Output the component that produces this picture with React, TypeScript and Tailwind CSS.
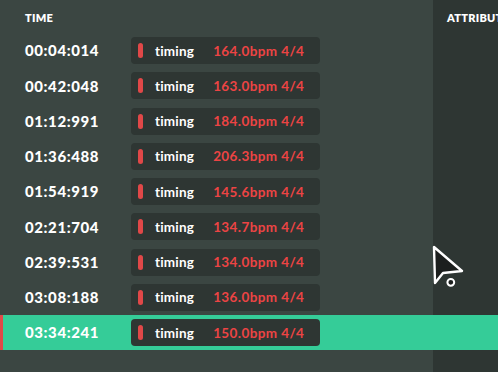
const rows = [
  { time: "00:04:014", bpm: "164.0bpm 4/4" },
  { time: "00:42:048", bpm: "163.0bpm 4/4" },
  { time: "01:12:991", bpm: "184.0bpm 4/4" },
  { time: "01:36:488", bpm: "206.3bpm 4/4" },
  { time: "01:54:919", bpm: "145.6bpm 4/4" },
  { time: "02:21:704", bpm: "134.7bpm 4/4" },
  { time: "02:39:531", bpm: "134.0bpm 4/4" },
  { time: "03:08:188", bpm: "136.0bpm 4/4" },
  { time: "03:34:241", bpm: "150.0bpm 4/4", active: true },
];

function Cursor() {
  return (
    <svg
      className="absolute left-[430px] top-[243px]"
      width="38"
      height="48"
      viewBox="0 0 38 48"
    >
      <path
        d="M4 4 L5 40 L13 30 L32 28 Z"
        fill="#1c1f1e"
        stroke="white"
        strokeWidth="2.4"
        strokeLinejoin="round"
      />
      <circle cx="20.8" cy="39.3" r="3.4" fill="#1c1f1e" stroke="white" strokeWidth="2" />
    </svg>
  );
}

export default function App() {
  return (
    <div
      className="relative w-[498px] h-[372px] overflow-hidden bg-[#3b4642] text-white"
      style={{ fontFamily: "Lato, 'Noto Sans', sans-serif" }}
    >
      <div className="flex h-full">
        <div className="w-[433px] shrink-0" />
        <div className="flex-1 bg-[#2e3633] pl-[14px] pt-[10px]">
          <div className="text-[11px] font-extrabold tracking-wide whitespace-nowrap">ATTRIBUTES</div>
        </div>
      </div>
      <div className="absolute inset-0">
        <div className="h-[33px] pl-[25px] pt-[10px] text-[11px] font-extrabold tracking-wide">
          TIME
        </div>
        {rows.map((r) => (
          <div
            key={r.time}
            className={`relative flex items-center h-[35.25px] ${
              r.active ? "bg-[#35cc98]" : ""
            }`}
          >
            {r.active && <div className="absolute left-0 top-0 bottom-0 w-[3px] bg-[#e04848]" />}
            <div className="w-[131px] pl-[25px] text-[15px] font-black tracking-[0.6px]">
              {r.time}
            </div>
            <div className="flex items-center h-[27px] rounded-[4px] bg-[#2e3633] pl-[7px] pr-[16px]">
              <div className="w-[5px] h-[15px] rounded-full bg-[#e04848]" />
              <div className="ml-[12px] text-[13.5px] font-bold tracking-[0.2px]">timing</div>
              <div className="ml-[19px] text-[13.5px] font-bold tracking-[0.4px] text-[#ec4444]">
                {r.bpm}
              </div>
            </div>
          </div>
        ))}
      </div>
      <Cursor />
    </div>
  );
}
